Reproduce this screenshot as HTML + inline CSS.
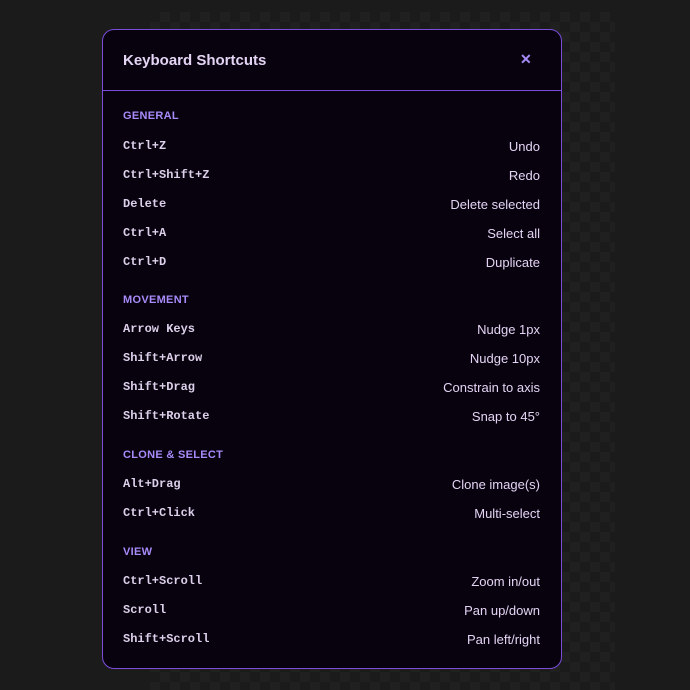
<!DOCTYPE html><html><head><style>
body{margin:0;width:690px;height:690px;background:#1b1b1b;font-family:"Liberation Sans",sans-serif;position:relative;overflow:hidden}
.bgp{position:absolute;left:150px;top:12px;width:465px;height:678px;background:repeating-conic-gradient(#202020 0 25%,#1b1b1b 0 50%) 0 0/20px 20px}
.m{position:absolute;left:102px;top:29px;width:458px;height:638px;background:#08020f;border:1px solid #7c4ddb;border-radius:12px}
.h{height:60px;border-bottom:1px solid #7c4ddb;position:relative}
.t{position:absolute;left:20px;top:22px;font-size:15px;font-weight:bold;color:#e4d4f4}
.x{position:absolute;left:417px;top:21px;font-size:14px;font-weight:bold;color:#a78bfa}
.s{position:absolute;left:20px;font-size:11px;font-weight:bold;color:#a78bfa;letter-spacing:.3px}
.r{position:absolute;left:20px;right:21px;height:16px;color:#e4d4f4}
.k{position:absolute;left:0;font-family:"Liberation Mono",monospace;font-size:12px;font-weight:bold;color:#ddd0ea}
.d{position:absolute;right:0;font-size:13px}
</style></head><body><div class="bgp"></div>
<div class="m"><div class="h"><div class="t">Keyboard Shortcuts</div><div class="x">✕</div></div>
<div class="s" style="top:80px">GENERAL</div>
<div class="r" style="top:109px"><span class="k">Ctrl+Z</span><span class="d">Undo</span></div>
<div class="r" style="top:138px"><span class="k">Ctrl+Shift+Z</span><span class="d">Redo</span></div>
<div class="r" style="top:167px"><span class="k">Delete</span><span class="d">Delete selected</span></div>
<div class="r" style="top:196px"><span class="k">Ctrl+A</span><span class="d">Select all</span></div>
<div class="r" style="top:225px"><span class="k">Ctrl+D</span><span class="d">Duplicate</span></div>
<div class="s" style="top:264px">MOVEMENT</div>
<div class="r" style="top:292px"><span class="k">Arrow Keys</span><span class="d">Nudge 1px</span></div>
<div class="r" style="top:321px"><span class="k">Shift+Arrow</span><span class="d">Nudge 10px</span></div>
<div class="r" style="top:350px"><span class="k">Shift+Drag</span><span class="d">Constrain to axis</span></div>
<div class="r" style="top:379px"><span class="k">Shift+Rotate</span><span class="d">Snap to 45°</span></div>
<div class="s" style="top:419px">CLONE &amp; SELECT</div>
<div class="r" style="top:447px"><span class="k">Alt+Drag</span><span class="d">Clone image(s)</span></div>
<div class="r" style="top:476px"><span class="k">Ctrl+Click</span><span class="d">Multi-select</span></div>
<div class="s" style="top:516px">VIEW</div>
<div class="r" style="top:544px"><span class="k">Ctrl+Scroll</span><span class="d">Zoom in/out</span></div>
<div class="r" style="top:573px"><span class="k">Scroll</span><span class="d">Pan up/down</span></div>
<div class="r" style="top:602px"><span class="k">Shift+Scroll</span><span class="d">Pan left/right</span></div>
</div></body></html>
